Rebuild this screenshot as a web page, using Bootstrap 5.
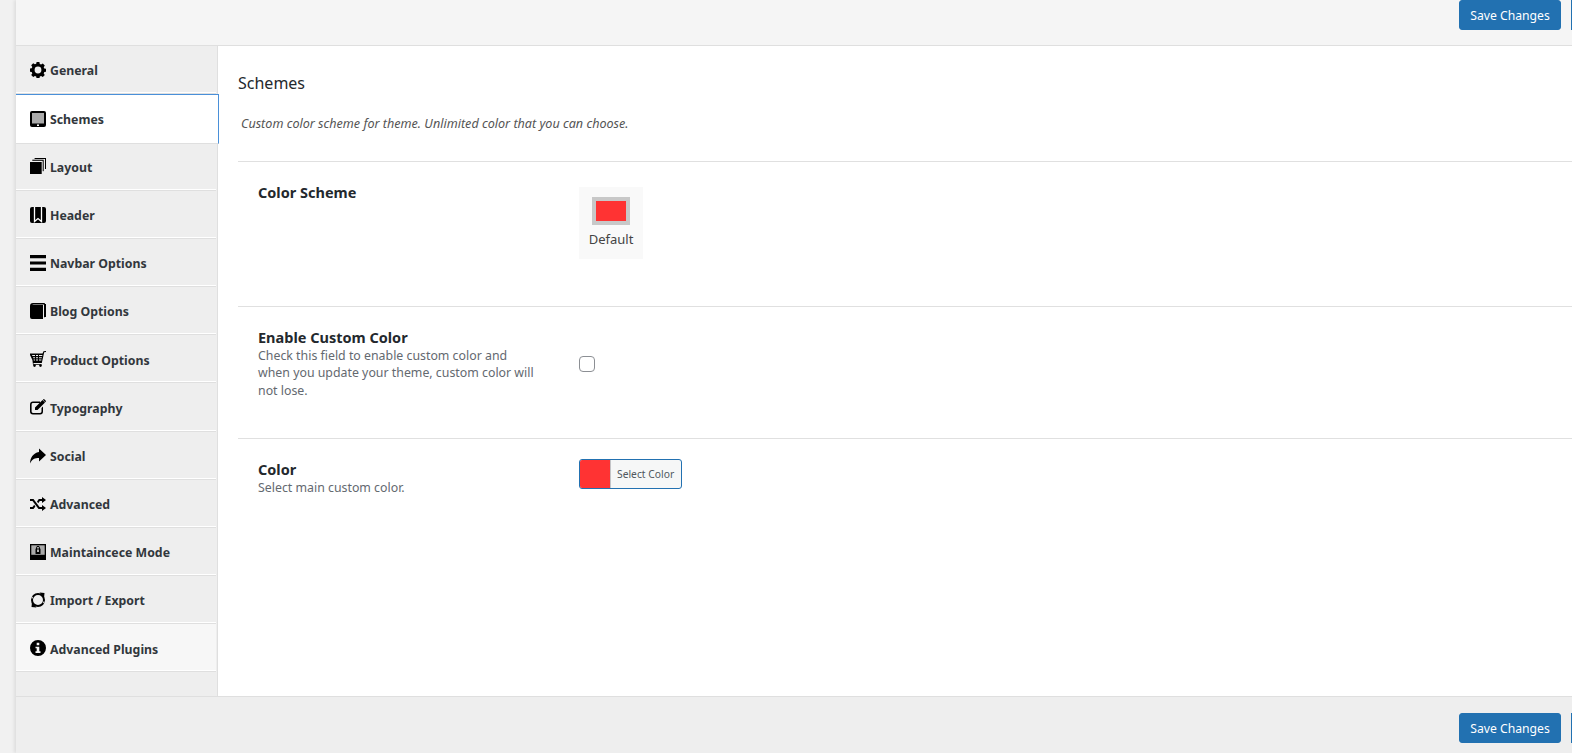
<!DOCTYPE html>
<html lang="en">
<head>
<meta charset="utf-8">
<title>Theme Options</title>
<link rel="stylesheet" href="https://cdn.jsdelivr.net/npm/bootstrap@5.3.0/dist/css/bootstrap.min.css">
<style>
html,body{height:753px;overflow:hidden}
body{background:#f1f1f1;font-family:"Noto Sans","Open Sans",sans-serif;color:#333}
.opt-shell{height:753px;margin-left:16px;box-shadow:-2px 0 3px rgba(0,0,0,.08);overflow:hidden}
.opt-top{height:46px;background:#f5f5f5;border-bottom:1px solid #dfdfdf}
.opt-bottom{height:57px;background:#eee;border-top:1px solid #dfdfdf;padding-top:16px}
.opt-save{width:102px;height:30px;padding:1px 0 0;font-size:12.2px;line-height:28px;background:#2271b1;border:1px solid #2271b1;color:#fff;border-radius:3px}
.opt-next{width:1px;height:30px;padding:0;margin-left:10px;background:#2271b1;border:0;border-radius:0}
.opt-mid{height:650px;background:#fff}
.opt-side{width:202px;background:#eee;border-right:1px solid #dfdfdf;flex:none;position:relative}
.opt-tab{height:48.2px;padding:4px 0 0 14px;gap:4px;font-size:12.3px;font-weight:700;color:#32373c;text-decoration:none;border-bottom:1px solid #dfdfdf;box-shadow:inset 0 -1px 0 #fff;width:200px}
.opt-tab svg{width:16px;height:16px;flex:none;fill:#000;margin-top:-3px}
.opt-tab.is-active{background:#fff;width:204px;height:50.2px;margin:0 0 -2px -1px;padding:2px 0 0 14px;border:1px solid #4a90d9;border-bottom-color:#dfdfdf;box-shadow:none;position:relative;z-index:2}
.opt-tab.is-light{background:#f7f7f7}
.opt-pane{padding:0 0 0 20px;min-width:0}
.opt-title{font-size:16px;font-weight:400;color:#23282d;margin:0;padding-top:26px;line-height:22px;height:61px}
.opt-intro{font-size:12.6px;font-style:italic;color:#555;margin:0;padding-left:3px;line-height:17px;height:54px;padding-top:8px}
.opt-line{border-top:1px solid #e0e0e0;padding-left:20px}
.opt-label{width:321px;flex:none}
.opt-name{font-size:14.5px;font-weight:700;color:#23282d;line-height:19px}
.opt-desc{font-size:12.35px;color:#646970;line-height:17.4px;width:280px}
.opt-line-a{height:145px;padding-top:21px}
.opt-line-b{height:132px;padding-top:21px}
.opt-line-c{padding-top:21px}
.opt-preset{width:64px;height:72px;margin-top:4px;background:#f9f9f9;padding-top:10px;font-size:13px;color:#444;text-align:center;line-height:17px}
.opt-swatch{width:38px;height:28px;border:4px solid #c8c8c8;background:#f33;margin:0 auto 6px}
.opt-check{width:16px;height:16px;margin:0;margin-top:28px;border:1px solid #8c8f94;border-radius:4px}
.opt-color{width:103px;height:30px;padding:0;margin-top:-1px;border:1px solid #2271b1;border-radius:3px;background:#f6f7f7;overflow:hidden;font-size:10.3px;color:#50575e}
.opt-chip{width:31px;height:100%;background:#f33;border-right:1px solid #c3c4c7;flex:none}
.opt-chip-text{padding-left:6px;line-height:28px}
</style>
</head>
<body>
<div class="opt-shell d-flex flex-column">
  <div class="opt-top d-flex justify-content-end">
    <button class="btn opt-save" type="button">Save Changes</button><span class="opt-next"></span>
  </div>
  <div class="opt-mid d-flex">
    <div class="opt-side">
      <a class="opt-tab d-flex align-items-center" href="#"><svg viewBox="0 0 16 16"><path fill-rule="evenodd" d="M6.600 0h2.800l.4 2 1.300.6 1.700-1.100 2 2-1.100 1.700.6 1.300 2 .4v2.800l-2 .4-.6 1.300 1.100 1.700-2 2-1.700-1.100-1.300.6-.4 2H6.600l-.4-2-1.300-.6-1.700 1.100-2-2 1.100-1.700-.6-1.300-2-.4V6.600l2-.4.6-1.300-1.100-1.700 2-2 1.700 1.100 1.300-.6zM8 4.600a3.400 3.400 0 1 0 0 6.800 3.400 3.400 0 0 0 0-6.800z"/></svg>General</a>
      <a class="opt-tab is-active d-flex align-items-center" href="#"><svg viewBox="0 0 16 16"><rect width="16" height="16" rx="2"/><rect x="2" y="2" width="12" height="10.500" fill="#aaa"/><rect x="7" y="13.500" width="2" height="1.500" fill="#fff"/></svg>Schemes</a>
      <a class="opt-tab d-flex align-items-center" href="#"><svg viewBox="0 0 16 16"><rect x="4.600" width="11.400" height="11"/><rect x="3.600" y="1" width="11.400" height="11" fill="#eee"/><rect x="2.300" y="1.700" width="11.400" height="11.500"/><rect x="1.300" y="2.800" width="11.400" height="11.500" fill="#eee"/><rect y="4" width="11.700" height="12"/></svg>Layout</a>
      <a class="opt-tab d-flex align-items-center" href="#"><svg viewBox="0 0 16 16"><rect width="16" height="16" rx="2"/><path d="M4.500 0v14.500L8 11.500l3.500 3V0" fill="#000" stroke="#fff" stroke-width="1.300"/></svg>Header</a>
      <a class="opt-tab d-flex align-items-center" href="#"><svg viewBox="0 0 16 16"><path d="M0 0h16v3.200H0zM0 6.400h16v3.200H0zM0 12.800h16V16H0z"/></svg>Navbar Options</a>
      <a class="opt-tab d-flex align-items-center" href="#"><svg viewBox="0 0 16 16"><path d="M3 0h11.500l.5.800V14l-1 .5V1.400H3.500L2 2h11v14H2a2 2 0 0 1-2-2V3a3 3 0 0 1 3-3z"/><path d="M15 1h1v13h-1z"/></svg>Blog Options</a>
      <a class="opt-tab d-flex align-items-center" href="#"><svg viewBox="0 0 16 16"><path fill-rule="evenodd" d="M0 2.500h12.500L13.500.3 16 0v1l-1.800.3L11.800 12H3.500v1h8v.8H3L2.400 9 0 4zM2 4l.4 1h2.600V4zM6 4v1h2V4zM9 4v1h3.200l.2-1zM3 6.200l.3 1h1.700v-1zM6 6.200v1h2v-1zM9 6.200v1h2.700l.2-1zM3.600 8.500l.2 1h1.200v-1zM6 8.500v1h2v-1zM9 8.500v1h2.300l.2-1z"/><circle cx="4.500" cy="14.600" r="1.300"/><circle cx="10.500" cy="14.600" r="1.300"/></svg>Product Options</a>
      <a class="opt-tab d-flex align-items-center" href="#"><svg viewBox="0 0 16 16"><path d="M3 2.500h7v1.500H3a1.400 1.400 0 0 0-1.400 1.400v7.100A1.400 1.400 0 0 0 3 13.900h7.100a1.400 1.400 0 0 0 1.400-1.400V9l1.500-1.500v5a3 3 0 0 1-2.900 3H3a3 3 0 0 1-3-3V5.400a3 3 0 0 1 3-2.900z"/><path d="M5 8.500 12.500 1 15 3.500 7.500 11H5zM13.300.3l.7-.3 2 2-.3.700-.5.500L13 .7z"/></svg>Typography</a>
      <a class="opt-tab d-flex align-items-center" href="#"><svg viewBox="0 0 16 16"><path d="M9 .5 16 7l-7 6.500V10C5 10 2 11 0 15.500 0 10 3 5 9 4z"/></svg>Social</a>
      <a class="opt-tab d-flex align-items-center" href="#"><svg viewBox="0 0 16 16"><path d="M0 3h3.500l6 8H12V9l4 3-4 3v-2H8.500l-6-8H0z"/><path d="M12 1l4 3-4 3V5H9.800L8.200 7.200 7 5.500 8.800 3H12zM0 11h2.500l1.700-2.300 1.200 1.700L3.500 13H0z"/></svg>Advanced</a>
      <a class="opt-tab d-flex align-items-center" href="#"><svg viewBox="0 0 16 16"><rect width="16" height="16"/><rect x="1.300" y="1.300" width="13.400" height="9.500" fill="#aaa"/><rect x="5.500" y="4.500" width="5" height="5.500" rx=".5"/><path d="M6.500 5V3.800a1.500 1.500 0 0 1 3 0V5" fill="none" stroke="#000"/><rect x="7.300" y="5.500" width="1.400" height="2.500" fill="#fff"/></svg>Maintaincece Mode</a>
      <a class="opt-tab d-flex align-items-center" href="#"><svg viewBox="0 0 16 16"><circle cx="8" cy="8" r="6" fill="none" stroke="#000" stroke-width="2"/><path d="M9.500 .5l5 .5-.5 5zM6.500 15.500l-5-.5.5-5z"/><path d="M1 3.500l2 2-1 1.500zM15 12.500l-2-2 1-1.500z" fill="#eee"/></svg>Import / Export</a>
      <a class="opt-tab is-light d-flex align-items-center" href="#"><svg viewBox="0 0 16 16"><path fill-rule="evenodd" d="M8 0a8 8 0 1 1 0 16A8 8 0 0 1 8 0zM6.700 2.700v2.500h2.600V2.700zM5.500 6.700v1.600h1.200v3H5.500v1.700h5v-1.700H9.300V6.700z"/></svg>Advanced Plugins</a>
    </div>
    <div class="opt-pane flex-grow-1">
      <h2 class="opt-title">Schemes</h2>
      <p class="opt-intro">Custom color scheme for theme. Unlimited color that you can choose.</p>
      <div class="opt-line opt-line-a d-flex">
        <div class="opt-label"><div class="opt-name">Color Scheme</div></div>
        <div class="opt-preset"><div class="opt-swatch"></div>Default</div>
      </div>
      <div class="opt-line opt-line-b d-flex">
        <div class="opt-label"><div class="opt-name">Enable Custom Color</div><div class="opt-desc">Check this field to enable custom color and when you update your theme, custom color will not lose.</div></div>
        <div><input class="form-check-input opt-check d-block" type="checkbox" aria-label="Enable Custom Color"></div>
      </div>
      <div class="opt-line opt-line-c d-flex">
        <div class="opt-label"><div class="opt-name">Color</div><div class="opt-desc">Select main custom color.</div></div>
        <div><button class="btn opt-color d-flex" type="button"><span class="opt-chip"></span><span class="opt-chip-text">Select Color</span></button></div>
      </div>
    </div>
  </div>
  <div class="opt-bottom d-flex justify-content-end">
    <button class="btn opt-save" type="button">Save Changes</button><span class="opt-next"></span>
  </div>
</div>
</body>
</html>
